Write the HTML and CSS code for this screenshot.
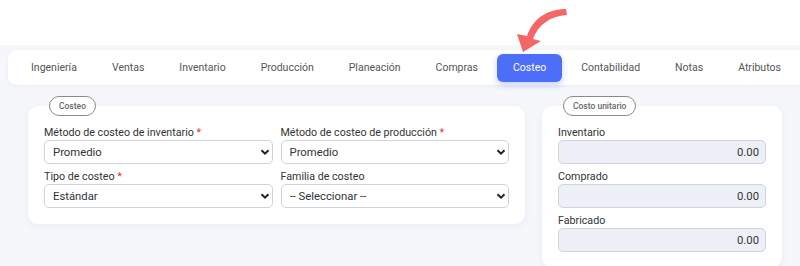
FILE: index.html
```html
<!DOCTYPE html>
<html lang="es">
<head>
  <meta charset="UTF-8" />
  <meta name="viewport" content="width=device-width, initial-scale=1.0" />
  <title>Costeo - Artículo</title>
  <link rel="stylesheet" href="styles.css">
</head>
<body>
  <header class="barra-superior">
    <svg class="flecha" width="70" height="60" viewBox="0 0 70 60">
      <path d="M66 9 C48 9 33 18 27 36 L17 34 L23 52 L41 41 L33 39 C38 25 50 16 67 15 Z" fill="#f36767" />
    </svg>
  </header>

  <main class="contenido">
    <nav class="pestanas">
      <a href="#">Ingeniería</a>
      <a href="#">Ventas</a>
      <a href="#">Inventario</a>
      <a href="#">Producción</a>
      <a href="#">Planeación</a>
      <a href="#">Compras</a>
      <a href="#" class="activa">Costeo</a>
      <a href="#">Contabilidad</a>
      <a href="#">Notas</a>
      <a href="#">Atributos</a>
    </nav>

    <div class="paneles">
      <section class="tarjeta tarjeta-costeo">
        <span class="etiqueta">Costeo</span>
        <div class="rejilla">
          <div class="campo">
            <label>Método de costeo de inventario <span class="req">*</span></label>
            <div class="selector">
              <select><option>Promedio</option></select>
              <svg class="chevron" width="10" height="10" viewBox="0 0 10 10"><path d="M1.5 3.2 L5 6.7 L8.5 3.2" fill="none" stroke="#222" stroke-width="2" /></svg>
            </div>
          </div>
          <div class="campo">
            <label>Método de costeo de producción <span class="req">*</span></label>
            <div class="selector">
              <select><option>Promedio</option></select>
              <svg class="chevron" width="10" height="10" viewBox="0 0 10 10"><path d="M1.5 3.2 L5 6.7 L8.5 3.2" fill="none" stroke="#222" stroke-width="2" /></svg>
            </div>
          </div>
          <div class="campo">
            <label>Tipo de costeo <span class="req">*</span></label>
            <div class="selector">
              <select><option>Estándar</option></select>
              <svg class="chevron" width="10" height="10" viewBox="0 0 10 10"><path d="M1.5 3.2 L5 6.7 L8.5 3.2" fill="none" stroke="#222" stroke-width="2" /></svg>
            </div>
          </div>
          <div class="campo">
            <label>Familia de costeo</label>
            <div class="selector">
              <select><option>-- Seleccionar --</option></select>
              <svg class="chevron" width="10" height="10" viewBox="0 0 10 10"><path d="M1.5 3.2 L5 6.7 L8.5 3.2" fill="none" stroke="#222" stroke-width="2" /></svg>
            </div>
          </div>
        </div>
      </section>

      <section class="tarjeta tarjeta-unitario">
        <span class="etiqueta">Costo unitario</span>
        <div class="lista">
          <div class="campo">
            <label>Inventario</label>
            <input type="text" value="0.00" disabled />
          </div>
          <div class="campo">
            <label>Comprado</label>
            <input type="text" value="0.00" disabled />
          </div>
          <div class="campo">
            <label>Fabricado</label>
            <input type="text" value="0.00" disabled />
          </div>
        </div>
      </section>
    </div>
  </main>
</body>
</html>
```

FILE: styles.css
```css
body {
  margin: 0;
  font-family: Roboto, 'Liberation Sans', sans-serif;
  background-color: #f5f7fb;
  color: #333;
  overflow: hidden;
}

.barra-superior {
  position: relative;
  height: 45px;
  background-color: #fff;
}

.flecha {
  position: absolute;
  left: 500px;
  top: 0;
  z-index: 2;
}

.contenido {
  padding: 5px 0 0 8px;
}

/* pestañas */
.pestanas {
  display: flex;
  align-items: center;
  gap: 3px;
  height: 35px;
  margin-right: -30px;
  padding-left: 7px;
  background-color: #fff;
  border-radius: 8px;
  box-shadow: 0 1px 4px rgba(30, 40, 80, 0.06);
}

.pestanas a {
  padding: 0 16px;
  height: 28px;
  line-height: 28px;
  font-size: 10.5px;
  color: #555;
  text-decoration: none;
  border-radius: 6px;
  white-space: nowrap;
}

.pestanas a.activa {
  background-color: #4d6ef8;
  color: #fff;
  box-shadow: 0 3px 6px rgba(77, 110, 248, 0.3);
}

/* tarjetas */
.paneles {
  display: flex;
  gap: 17px;
  margin-top: 21px;
  padding-left: 20px;
  align-items: flex-start;
}

.tarjeta {
  position: relative;
  background-color: #fff;
  border-radius: 10px;
  padding: 20px 16px 16px;
  box-shadow: 0 2px 8px rgba(30, 40, 80, 0.05);
}

.tarjeta-costeo {
  width: 465px;
}

.tarjeta-unitario {
  width: 208px;
}

.etiqueta {
  position: absolute;
  left: 21px;
  top: -10px;
  height: 18px;
  line-height: 18px;
  padding: 0 9px;
  font-size: 8.5px;
  font-weight: 500;
  color: #666;
  background-color: #fff;
  border: 1px solid #8a8a8a;
  border-radius: 10px;
}

.rejilla {
  display: grid;
  grid-template-columns: 1fr 1fr;
  column-gap: 8px;
  row-gap: 6px;
}

.lista {
  display: flex;
  flex-direction: column;
  gap: 6px;
}

.campo label {
  display: block;
  height: 14px;
  line-height: 14px;
  font-size: 10.7px;
  color: #333;
}

.req {
  color: #e03131;
}

.selector {
  position: relative;
}

.selector select,
.campo input {
  display: block;
  width: 100%;
  box-sizing: border-box;
  height: 24px;
  font-family: Roboto, 'Liberation Sans', sans-serif;
  font-size: 11.3px;
  font-weight: 400;
  color: #333;
  background-color: #fff;
  border: 1px solid #cfd3da;
  border-radius: 5px;
  padding: 0 24px 0 8px;
  appearance: none;
  -webkit-appearance: none;
}

.chevron {
  position: absolute;
  right: 3px;
  top: 7px;
  pointer-events: none;
}

.campo input {
  padding: 0 6px;
  text-align: right;
  background-color: #eef0f7;
  opacity: 1;
}
```
